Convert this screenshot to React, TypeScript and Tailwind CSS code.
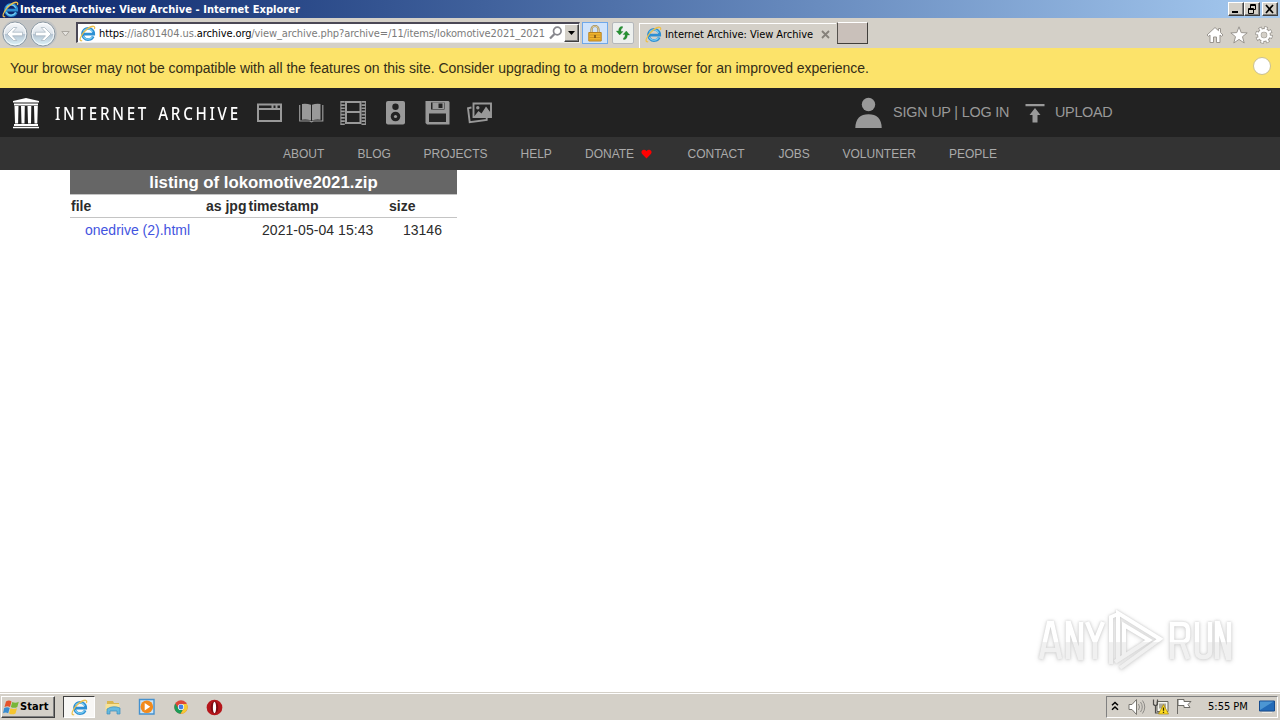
import type { ReactNode } from "react";

const tahoma = "font-['DejaVu_Sans_Condensed','DejaVu_Sans',sans-serif] [font-stretch:condensed]";

function IELogo({ className }: { className: string }) {
  return (
    <svg viewBox="0 0 16 16" className={className} fill="none">
      <path d="M13.400 10.700A5.300 5.300 0 1 1 13.900 8.600H4.500" stroke="#2d8fd3" strokeWidth="2.500" />
      <path d="M12.800 10.800A4.900 4.900 0 0 1 4 10.500M4.200 6A4.800 4.800 0 0 1 12.800 6.500" stroke="#7fd2f5" strokeWidth="1" />
      <path d="M3 14.600C.8 15.600.3 13.500 2 10.600 4.200 6 10.400 .9 13.700 1.200c1.400.2 1.200 1.500.7 2.600" stroke="#ecc04c" strokeWidth="1.200" />
    </svg>
  );
}

function NavCircle({ flip }: { flip?: boolean }) {
  return (
    <svg viewBox="0 0 26 26" className={flip ? "h-[26px] w-[26px] -scale-x-100" : "h-[26px] w-[26px]"}>
      <defs>
        <linearGradient id={flip ? "ng2" : "ng1"} x1="0" y1="0" x2="0" y2="1">
          <stop offset="0" stopColor="#f7f9fb" />
          <stop offset=".48" stopColor="#dce3ea" />
          <stop offset=".52" stopColor="#b5c4d2" />
          <stop offset="1" stopColor="#def5fb" />
        </linearGradient>
      </defs>
      <circle cx="13" cy="13" r="12" fill={flip ? "url(#ng2)" : "url(#ng1)"} stroke="#8d9aa5" />
      <circle cx="13" cy="13" r="10.800" fill="none" stroke="#fff" strokeOpacity=".8" />
      <path d="M5 13l6.500-6.500h3.300L10.500 11.200h10v3.600h-10l4.300 4.700h-3.300z" fill="#fff" stroke="#a3b1bd" strokeWidth=".7" />
    </svg>
  );
}

function WinButton({ children, className = "" }: { children: ReactNode; className?: string }) {
  return (
    <div
      className={`flex h-[14px] w-[16px] items-center justify-center border border-t-white border-l-white border-r-[#404040] border-b-[#404040] bg-[#d4d0c8] shadow-[inset_-1px_-1px_0_#808080] ${className}`}
    >
      {children}
    </div>
  );
}

function TitleBar() {
  return (
    <header className="flex h-[18px] items-center bg-linear-to-r from-[#0c246a] to-[#a6caf0] pl-[2px] pr-[2px]">
      <IELogo className="h-[17px] w-[17px] shrink-0" />
      <span className={`${tahoma} ml-[1px] flex-1 whitespace-nowrap pt-px text-[11px] leading-[16px] font-bold tracking-[0.05px] text-white`}>
        Internet Archive: View Archive - Internet Explorer
      </span>
      <WinButton>
        <svg viewBox="0 0 12 10" className="h-[10px] w-[12px] shrink-0"><path d="M2 7h6v2H2z" /></svg>
      </WinButton>
      <WinButton>
        <svg viewBox="0 0 12 10" className="h-[10px] w-[12px] shrink-0" fill="none" stroke="#000">
          <path d="M4.500 4V.5h5v5H8M4 1.500h6M2.500 4.500h5v5h-5zM2 5.500h6" />
        </svg>
      </WinButton>
      <WinButton className="ml-[2px]">
        <svg viewBox="0 0 12 10" className="h-[10px] w-[12px] shrink-0"><path d="M2 1l7 8M9 1L2 9" stroke="#000" strokeWidth="1.700" /></svg>
      </WinButton>
    </header>
  );
}

function Toolbar() {
  return (
    <div className={`${tahoma} flex h-[30px] items-start bg-[#d4d0c8] text-[11px]`}>
      <div className="ml-[2px] mt-[2px] flex h-[27px] w-[55px] items-center gap-[2px] rounded-full bg-[#c3c4c4]">
        <NavCircle />
        <NavCircle flip />
      </div>
      <svg viewBox="0 0 9 6" className="ml-[4px] mt-[13px] h-[6px] w-[9px]">
        <path d="M.8.500h7.400L4.500 5z" fill="#e5e3df" stroke="#aaa69f" />
      </svg>
      <div className="ml-[6px] mt-[4px] flex h-[21px] w-[504px] items-center border-t-2 border-l-2 border-r border-b border-t-[#4b4856] border-l-[#4b4856] border-r-[#eee] border-b-[#eee] bg-white">
        <IELogo className="ml-[1px] h-[17px] w-[17px] shrink-0" />
        <div className="ml-[3px] w-[449px] shrink-0 whitespace-nowrap pt-[2px] tracking-[-0.1px] text-[#7b7b7b]">
          <span className="text-black">https</span>://ia801404.us.<span className="text-black">archive.org</span>/view_archive.php?archive=/11/items/lokomotive2021_2021
        </div>
        <svg viewBox="0 0 14 14" className="ml-[1px] h-[14px] w-[14px] shrink-0" fill="none" stroke="#87878d">
          <circle cx="8.300" cy="5" r="3.800" strokeWidth="1.700" />
          <path d="M5.500 8L1 12.500" strokeWidth="2.300" />
        </svg>
        <div className="ml-[1px] flex h-[18px] w-[15px] shrink-0 items-center justify-center border border-t-white border-l-white border-r-[#404040] border-b-[#404040] bg-[#d4d0c8] shadow-[inset_-1px_-1px_0_#808080]">
          <svg viewBox="0 0 7 4" className="h-[4px] w-[7px]"><path d="M0 0h7L3.500 4z" /></svg>
        </div>
      </div>
      <div className="ml-[2px] mt-[4px] flex h-[22px] w-[26px] items-center justify-center border border-[#6fa8ea] bg-[#cfe3fb]">
        <svg viewBox="0 0 14 17" className="h-[17px] w-[14px]">
          <path d="M3.500 8V4.500a3.500 3.500 0 0 1 7 0V8" fill="none" stroke="#a38b55" strokeWidth="2.200" />
          <path d="M3.500 8V4.500a3.500 3.500 0 0 1 7 0V8" fill="none" stroke="#e8dcae" strokeWidth=".8" />
          <path d="M.8 7.500h12.400v8.500H.8z" fill="#f0b52c" stroke="#b98222" />
          <path d="M1.500 10h11M1.500 12.500h11M1.500 15h11" stroke="#cf9426" />
          <path d="M7 10v3" stroke="#765015" strokeWidth="1.500" />
        </svg>
      </div>
      <div className="ml-[4px] mt-[4px] flex h-[22px] w-[22px] items-center justify-center rounded-[2px] border border-[#b5b8bb] bg-[#edf0ee]">
        <svg viewBox="0 0 16 16" className="h-[16px] w-[16px] shrink-0" fill="#269331" stroke="#17682c" strokeWidth=".3">
          <path d="M7.500 1.500C4.500 1.500 3.700 3.500 3.700 6H1.300l3.400 4L8 6.500H5.900c0-2 .3-3 1.600-3.500z" />
          <path d="M8.500 14.500c3 0 3.800-2 3.800-4.500h2.400l-3.400-4L8 9.500h2.100c0 2-.3 3-1.600 3.500z" />
        </svg>
      </div>
      <div className="ml-[5px] mt-[5px] flex h-[25px] w-[197px] items-start border-t border-l border-white pt-[2px]">
        <IELogo className="ml-[5px] h-[17px] w-[17px] shrink-0" />
        <span className="ml-[3px] w-[150px] shrink-0 whitespace-nowrap pt-px leading-[16px] tracking-[-0.05px] text-black">
          Internet Archive: View Archive
        </span>
        <svg viewBox="0 0 9 9" className="ml-[6px] mt-[4px] h-[9px] w-[9px]"><path d="M1 1l7 7M8 1L1 8" stroke="#85817a" strokeWidth="1.800" /></svg>
      </div>
      <div className="ml-[1px] mt-[4px] h-[22px] w-[31px] border-t border-t-white border-l border-l-[#55524e] border-r border-r-[#403e3b] border-b border-b-[#403e3b] bg-[#c9c0ba]" />
      <div className="ml-auto mr-[7px] mt-[8px] flex gap-[7px]">
        <svg viewBox="0 0 18 18" className="h-[18px] w-[18px] translate-x-px" fill="#fff" stroke="#99958f">
          <path d="M9 1.500L1 9l1.500 1.300L4 9v7.500h3.500V11h3v5.500H14V9l1.500 1.300L17 9l-2.500-2.500V2.500h-2v2.200z" />
        </svg>
        <svg viewBox="0 0 18 18" className="h-[18px] w-[18px]" fill="#fff" stroke="#99958f">
          <path d="M9 .8l2.200 5.800 6 .3-4.700 3.800L14.200 17 9 13.400 3.800 17l1.700-6.300L.8 6.900l6-.3z" />
        </svg>
        <svg viewBox="0 0 18 18" className="h-[18px] w-[18px]">
          <circle cx="9" cy="9" r="6.800" fill="none" stroke="#99958f" strokeWidth="4" strokeDasharray="3.200 2.140" />
          <circle cx="9" cy="9" r="4.800" fill="none" stroke="#99958f" strokeWidth="4.200" />
          <circle cx="9" cy="9" r="6.600" fill="none" stroke="#fff" strokeWidth="2.800" strokeDasharray="2 3.180" strokeDashoffset="-.6" />
          <circle cx="9" cy="9" r="4.600" fill="none" stroke="#fff" strokeWidth="2.700" />
        </svg>
      </div>
    </div>
  );
}

function Banner() {
  return (
    <div className="flex h-[40px] items-start bg-[#fce36a] pl-[10px] pr-[9px] text-[14px] text-[#332d17]">
      <p className="mt-[10px] whitespace-nowrap leading-[20px] tracking-[-0.02px]">
        Your browser may not be compatible with all the features on this site. Consider upgrading to a modern browser for an improved experience.
      </p>
      <div className="ml-auto mt-[9px] h-[18px] w-[18px] rounded-full border border-[#c9c093] bg-white" />
    </div>
  );
}

function MediaIcons() {
  const size = "h-[28px] w-[28px]";
  return (
    <div className="ml-[16px] mt-[11px] flex gap-[14px] text-[#999]">
      <svg viewBox="0 0 28 28" className={size} fill="none" stroke="currentColor" strokeWidth="2">
        <path d="M3 5.500h23v16.500H3zM3 10h23M17.500 5.500v4M21.500 5.500v4" />
      </svg>
      <svg viewBox="0 0 28 28" className={size} fill="currentColor">
        <path d="M5 5q4.500-.6 9 .7V21.500q-4-1.300-9-.7zM15 5.700q4-1.300 8.500-.7v15.800q-4.500-.6-8.500.7z" />
        <path d="M2.700 6v16h9.800l2 .8 2-.8h9.300V6" fill="none" stroke="currentColor" strokeWidth="1.200" />
      </svg>
      <svg viewBox="0 0 28 28" className={size} fill="none" stroke="currentColor">
        <path d="M6.500 3h15M6.500 13h15M6.500 24h15M7 2v23M21.500 2v23" strokeWidth="2" />
        <path d="M3.800 2v24M24.500 2v24" strokeWidth="4" strokeDasharray="1.700 1.500" />
        <path d="M1.900 2v24M26.400 2v24" strokeWidth="1" />
      </svg>
      <svg viewBox="0 0 28 28" className={size}>
        <rect x="5" y="2" width="19" height="23.500" rx="2" fill="currentColor" />
        <circle cx="14.500" cy="7.700" r="3.200" fill="#222" />
        <circle cx="14.500" cy="17.500" r="4.800" fill="#222" />
        <circle cx="14.500" cy="17.500" r="1.600" fill="currentColor" />
      </svg>
      <svg viewBox="0 0 28 28" className={size}>
        <path d="M3.500 2h22L26.500 3v22.500H4L2.500 24V2z" fill="currentColor" />
        <path d="M8 3.500h13.500v7H8zM6 14.500h17v8.500H6z" fill="#262626" />
        <path d="M9.500 3.500h11.500v6.500H9.500z" fill="currentColor" />
        <path d="M15.500 4.500h4v4.500h-4z" fill="#222" />
      </svg>
      <svg viewBox="0 0 28 28" className={size} fill="none" stroke="currentColor" strokeWidth="1.900">
        <path d="M8.500 4.500h17.500v13.500H8.500z" />
        <path d="M6.500 8.500l-3.500.7 1.700 14 17-2.200V19" />
        <circle cx="12.800" cy="8.800" r="1.700" fill="currentColor" stroke="none" />
        <path d="M9.500 17l4-5 3 2.500 4.500-7L25.500 13.500v3.500z" fill="currentColor" stroke="none" />
      </svg>
    </div>
  );
}

function ArchiveHeader() {
  return (
    <div className="flex h-[49px] bg-[#222] text-[14.4px] text-[#999]">
      <svg viewBox="0 0 28 31" className="ml-[12px] mt-[10px] h-[31px] w-[28px] shrink-0" fill="#fff">
        <path d="M14 0L1 3v1.500h26V3zM2 5.500h24v2H2zM2 26h24v2H2zM1 28.700h26v1.500H1z" />
        <path d="M2.500 8h4l-.4 17.500H3zM9 8h3.800l-.3 17.500H9.500zM15.500 8h3.800l-.3 17.500H16zM22 8h3.800l-.5 17.500h-2.800z" />
      </svg>
      <div className="ml-[15px] mt-[11px] w-[184px] whitespace-nowrap leading-[28px]">
        <span className="inline-block origin-left scale-x-[0.82] font-['Noto_Sans','Open_Sans',sans-serif] text-[18.5px] font-medium tracking-[3.300px] text-white [word-spacing:3px]">
          INTERNET ARCHIVE
        </span>
      </div>
      <MediaIcons />
      <svg viewBox="0 0 28 32" className="ml-[361px] mt-[9px] h-[32px] w-[28px] shrink-0 translate-x-[0.500px]" fill="#999">
        <circle cx="14" cy="7.500" r="6.700" />
        <path d="M.8 31C.8 21.500 6 17.200 14 17.200S27.200 21.500 27.200 31z" />
      </svg>
      <span className="ml-[11px] mt-[14px] w-[120px] whitespace-nowrap leading-[20px] tracking-[-0.2px]">SIGN UP | LOG IN</span>
      <svg viewBox="0 0 20 20" className="ml-[12px] mt-[15px] h-[20px] w-[20px] shrink-0" fill="#999">
        <path d="M.5 1h19v2.200H.5zM10 5l5.500 7H12.500v7.500h-5V12h-3z" />
      </svg>
      <span className="ml-[10px] mt-[14px] whitespace-nowrap leading-[20px] tracking-[-0.3px]">UPLOAD</span>
    </div>
  );
}

function SiteNav() {
  return (
    <nav className="flex h-[33px] items-center bg-[#333] pl-[283px] text-[12px] whitespace-nowrap text-[#aaa]">
      <span className="w-[74.5px]">ABOUT</span>
      <span className="w-[66px]">BLOG</span>
      <span className="w-[97px]">PROJECTS</span>
      <span className="w-[64.500px]">HELP</span>
      <span className="flex w-[102.5px] items-center gap-[7px]">
        DONATE
        <svg viewBox="0 0 12 11" className="h-[10px] w-[11px]">
          <path d="M6 10.500L1.200 5.500C-.7 3 1.200.5 3.500.8 5 .9 6 2.500 6 2.500S7 .9 8.500.8c2.300-.3 4.200 2.200 2.300 4.700z" fill="#f00" />
        </svg>
      </span>
      <span className="w-[91px]">CONTACT</span>
      <span className="w-[64px]">JOBS</span>
      <span className="w-[106.500px]">VOLUNTEER</span>
      <span>PEOPLE</span>
    </nav>
  );
}

function Listing() {
  return (
    <section className="ml-[70px] w-[387px] text-[14px] leading-[20px] text-[#2c2c2c]">
      <h1 className="h-[24px] bg-[#666] text-center text-[16.8px] leading-[25px] font-bold text-white">
        listing of lokomotive2021.zip
      </h1>
      <div className="grid h-[24px] grid-cols-[136px_41.500px_140.500px_68px] items-center border-t border-b border-[#c4c4c4] pl-[1px] font-bold whitespace-nowrap">
        <span>file</span>
        <span className="-ml-px">as jpg</span>
        <span>timestamp</span>
        <span>size</span>
      </div>
      <div className="grid h-[24px] grid-cols-[192px_141px_54px] items-center pl-[15px] whitespace-nowrap">
        <a className="text-[#4354e0]">onedrive (2).html</a>
        <span className="-ml-[15px] tracking-[0.05px]">2021-05-04 15:43</span>
        <span className="-ml-[15px]">13146</span>
      </div>
    </section>
  );
}

function Watermark() {
  return (
    <svg viewBox="0 0 200 64" className="absolute top-[608px] left-[1036px] h-[64px] w-[200px] [filter:drop-shadow(0_0_1px_#ccc)_drop-shadow(0_1px_2px_#ddd)]">
      <defs>
        <linearGradient id="wm" x1="0" y1="0" x2="0" y2="64" gradientUnits="userSpaceOnUse">
          <stop offset=".53" stopColor="#fff" />
          <stop offset=".54" stopColor="#f0f0f0" />
        </linearGradient>
      </defs>
      <g fill="none" stroke="url(#wm)" strokeWidth="4.500">
        <path d="M5 51l8-36h3l8 36M8 42h13M32 51V15h1l11 35h1V14M51 14l8 20 8-20M59 33v18" />
        <path d="M136 51V16h10q6 0 6 6v6q0 6-6 6h-9m9 0l6 17M161 14v29q0 6 6 6h1q6 0 6-6V14M181 51V15h1l10 35h1V14" />
        <path d="M75 56V9l7-3M82 52V5l42 26-40 29" strokeWidth="4" />
        <path d="M88 47V17l25 15-34 22" strokeWidth="4" />
      </g>
    </svg>
  );
}

function TaskIcons() {
  return (
    <>
      <svg viewBox="0 0 18 18" className="ml-[9px] h-[18px] w-[18px]">
        <path d="M3 3h6l1 2h5v5H3z" fill="#d9b64e" />
        <path d="M1.500 6h14v7h-14z" fill="#f7e296" />
        <path d="M3 11q6-4 13-1v6h-3v-3H6v3H3z" fill="#65b9de" stroke="#3a8dbd" strokeWidth=".7" />
      </svg>
      <svg viewBox="0 0 18 18" className="ml-[16px] h-[18px] w-[18px]">
        <path d="M1.500 1.500h14.500v14.500h-14.500z" fill="#c9e5fa" stroke="#4591ce" strokeWidth="1.400" />
        <circle cx="8.800" cy="8.800" r="6.300" fill="#f28a1c" />
        <path d="M6.700 5l5.500 3.700-5.500 3.700z" fill="#fff" />
      </svg>
      <svg viewBox="0 0 18 18" className="ml-[17px] h-[16px] w-[16px]">
        <circle cx="9" cy="9" r="7.500" fill="#dd4738" />
        <path d="M2.500 5.200A7.500 7.500 0 0 0 8.700 16.500L12.300 10.500 6 10.500z" fill="#1b9c58" />
        <path d="M9 5.500h6.600A7.500 7.500 0 0 1 8.500 16.500l3.800-6z" fill="#f5ca35" />
        <circle cx="9" cy="9" r="3.500" fill="#fff" />
        <circle cx="9" cy="9" r="2.700" fill="#437fe5" />
      </svg>
      <svg viewBox="0 0 18 18" className="ml-[17px] h-[17px] w-[17px]">
        <circle cx="9" cy="9" r="8.300" fill="#b5161b" />
        <ellipse cx="9" cy="9" rx="4" ry="6.500" fill="#7c0b12" />
        <ellipse cx="9" cy="9" rx="1.700" ry="6" fill="#fff" />
      </svg>
    </>
  );
}

function Tray() {
  return (
    <div className={`${tahoma} ml-auto mr-[2px] flex h-[22px] w-[172px] items-center border border-t-[#808080] border-l-[#808080] border-r-white border-b-white text-[11px] text-black`}>
      <svg viewBox="0 0 8 10" className="mb-[3px] ml-[4px] h-[10px] w-[8px]" fill="none" stroke="#000" strokeWidth="1.500">
        <path d="M1 4.300l3-2.800 3 2.800M1 8.800L4 6l3 2.800" />
      </svg>
      <svg viewBox="0 0 18 18" className="ml-[9px] h-[18px] w-[18px]" fill="none" stroke="#8e8c88">
        <path d="M1 6.500h3l4.500-5v15l-4.500-5H1z" fill="#fff" stroke="#77756f" />
        <path d="M10.500 6q2 3 0 6M12.500 4q3.500 5 0 10M14.500 2.500q4.500 6.500 0 13" />
      </svg>
      <svg viewBox="0 0 18 18" className="ml-[6px] h-[18px] w-[18px]">
        <path d="M5 3.500h11v10H5z" fill="#f6f6ef" stroke="#66665e" />
        <path d="M7 5.500h7v5H7z" fill="#aaa89c" />
        <path d="M1.500 1.500v5q2 2 4 0v-5M3.500 7.500v7.500H7" fill="none" stroke="#4f4e4a" strokeWidth="1.200" />
        <path d="M11.500 6.500l5 9.500h-10z" fill="#ffdd20" stroke="#a6850c" strokeWidth=".7" />
        <path d="M11.500 9.500v3.300M11.500 13.700v1.300" stroke="#382c04" strokeWidth="1.300" />
      </svg>
      <svg viewBox="0 0 18 18" className="ml-[5px] h-[18px] w-[18px]" fill="#fff" stroke="#6e6c67">
        <path d="M2.500 1v15M3 1.500h6v2h7l-3 3 2 3H9v-2H3z" />
      </svg>
      <span className="ml-[15px] w-[46px] whitespace-nowrap pt-px">5:55 PM</span>
      <svg viewBox="0 0 16 16" className="ml-[5px] h-[16px] w-[16px] shrink-0">
        <path d="M.5 2h15v10H.5z" fill="#236bb8" stroke="#164c8e" />
        <path d="M1 11L14.500 2.500H1z" fill="#68b2e5" fillOpacity=".6" />
        <path d="M3 13.500h10" stroke="#ece9e2" />
      </svg>
    </div>
  );
}

function Taskbar() {
  return (
    <footer className="flex h-[28px] items-center border-t border-[#d4d0c8] bg-[#d4d0c8] pt-px shadow-[inset_0_1px_0_#fff]">
      <div className={`${tahoma} ml-[1px] flex h-[22px] w-[54px] items-center border border-t-white border-l-white border-r-[#404040] border-b-[#404040] text-[11px] font-bold text-black shadow-[inset_-1px_-1px_0_#808080]`}>
        <svg viewBox="0 0 17 16" className="ml-[1px] h-[16px] w-[17px] shrink-0">
          <path d="M3 2.500q3-2 5.500 0L7 8Q4.500 6.500 1.500 8z" fill="#e5532b" />
          <path d="M9.300 3q3 1.600 6.500-.2L14.300 8q-3.300 1.700-6.500 0z" fill="#78b63a" />
          <path d="M1.200 9q3-1.600 5.500 0l-1.500 5.300q-2.700-1.600-5.200 0z" fill="#388cd0" />
          <path d="M7.500 9.300q3 1.500 6.500 0l-1.500 5.200q-3.300 1.700-6.500 0z" fill="#f5c52f" />
        </svg>
        <span className="pt-px tracking-[0.100px]">Start</span>
      </div>
      <div className="ml-[8px] flex h-[22px] w-[32px] items-center justify-center border border-t-[#404040] border-l-[#404040] border-r-white border-b-white bg-[#f8f7f5]">
        <IELogo className="h-[17px] w-[17px]" />
      </div>
      <TaskIcons />
      <Tray />
    </footer>
  );
}

export default function App() {
  return (
    <div className="relative flex h-[720px] w-[1280px] flex-col overflow-hidden bg-white font-['Liberation_Sans',Arial,sans-serif]">
      <TitleBar />
      <Toolbar />
      <Banner />
      <ArchiveHeader />
      <SiteNav />
      <main className="flex-1">
        <Listing />
      </main>
      <Taskbar />
      <Watermark />
    </div>
  );
}
